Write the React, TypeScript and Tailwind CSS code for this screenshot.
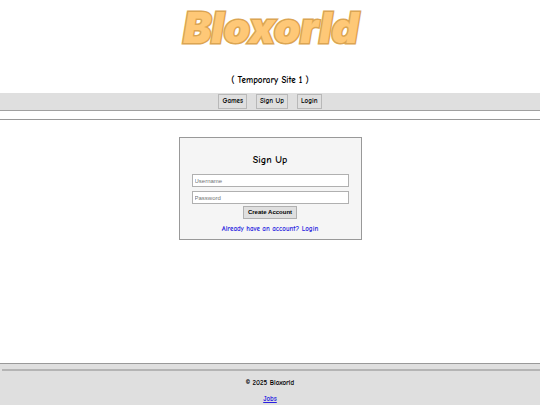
const navLinks = [
  { label: "Games", href: "#games" },
  { label: "Sign Up", href: "#signup" },
  { label: "Login", href: "#login" },
];

function Logo() {
  return (
    <svg
      viewBox="0 0 200 56"
      className="h-14 w-[200px] overflow-visible"
      role="img"
      aria-label="Bloxorld"
    >
      <text
        x="101"
        y="43"
        textAnchor="middle"
        className="fill-[#fec877] stroke-[#dba552] stroke-3 font-['Inter',sans-serif] text-[42px] font-black italic [paint-order:stroke]"
        strokeLinejoin="miter"
      >
        Bloxorld
      </text>
    </svg>
  );
}

function Header() {
  return (
    <header>
      <div className="flex flex-col items-center">
        <Logo />
        <p className="mt-[18px] mb-1.5 text-[9px] leading-[13px] font-bold">
          ( Temporary Site 1 )
        </p>
      </div>
      <nav className="flex justify-center gap-[9px] border-b border-[#a0a0a0] bg-[#dfdfdf] py-px">
        {navLinks.map((link) => (
          <a
            key={link.label}
            href={link.href}
            className="border border-[#b8b8b8] px-[3px] text-[7px] leading-[13px] font-bold"
          >
            {link.label}
          </a>
        ))}
      </nav>
      <hr className="mt-2 border-[#999999]" />
    </header>
  );
}

function SignUpForm() {
  return (
    <form
      className="flex w-[183px] flex-col items-center border border-[#999999] bg-[#f5f5f5] px-3 pt-3 pb-1"
      onSubmit={(e) => e.preventDefault()}
    >
      <h1 className="mb-1 text-[10px] leading-5 font-bold">Sign Up</h1>
      <input
        type="text"
        placeholder="Username"
        aria-label="Username"
        className="mb-1 h-[13px] w-full border border-[#b0b0b0] bg-white px-0.5 font-['Liberation_Sans',sans-serif] text-[6px] placeholder:text-[#757575]"
      />
      <input
        type="password"
        placeholder="Password"
        aria-label="Password"
        className="h-[13px] w-full border border-[#b0b0b0] bg-white px-0.5 font-['Liberation_Sans',sans-serif] text-[6px] placeholder:text-[#757575]"
      />
      <button
        type="submit"
        className="mt-0.5 border border-[#b0b0b0] bg-[#dfdfdf] px-1 font-['Liberation_Sans',sans-serif] text-[6px] leading-[11px] font-bold"
      >
        Create Account
      </button>
      <a
        href="#login"
        className="mt-1 text-[7px] leading-3 font-bold text-[#2a1fe0]"
      >
        Already have an account? Login
      </a>
    </form>
  );
}

function Footer() {
  return (
    <footer className="mt-auto border-t border-[#999999] bg-[#dfdfdf] text-center text-[7px] leading-3 font-bold">
      <hr className="mt-[5px] ml-0.5 border-t-2 border-[#b4b4b4]" />
      <p className="mt-1.5">© 2025 Bloxorld</p>
      <p className="mt-1">
        <a href="#jobs" className="text-[#2a1fe0] underline">
          Jobs
        </a>
      </p>
    </footer>
  );
}

export default function App() {
  return (
    <div className="flex min-h-screen flex-col bg-white font-['Comic_Sans_MS','Comic_Neue','Open_Sans',sans-serif] text-black">
      <Header />
      <main className="flex justify-center py-[17px]">
        <SignUpForm />
      </main>
      <Footer />
    </div>
  );
}
